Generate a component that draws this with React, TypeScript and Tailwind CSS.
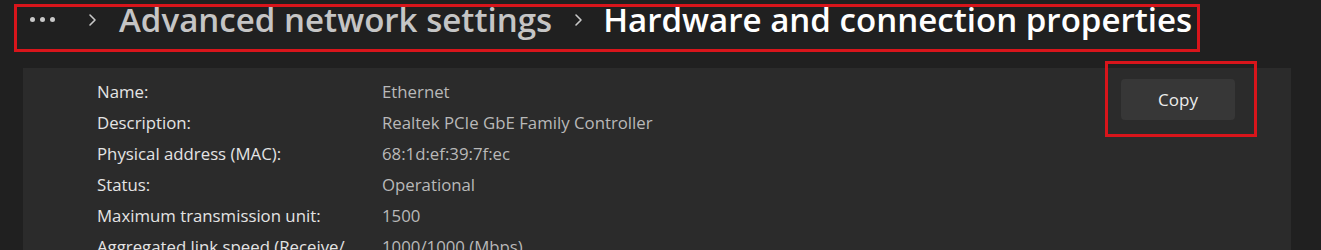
import React from "react";

const rows: [string, string][] = [
  ["Name:", "Ethernet"],
  ["Description:", "Realtek PCIe GbE Family Controller"],
  ["Physical address (MAC):", "68:1d:ef:39:7f:ec"],
  ["Status:", "Operational"],
  ["Maximum transmission unit:", "1500"],
  ["Aggregated link speed (Receive/", "1000/1000 (Mbps)"],
];

function Chevron() {
  return (
    <svg width="10" height="14" viewBox="0 0 10 14" className="block">
      <path d="M3 2 L8 7 L3 12" fill="none" stroke="#c8c8c8" strokeWidth="1.6" strokeLinecap="round" strokeLinejoin="round" />
    </svg>
  );
}

export default function App() {
  return (
    <div
      className="w-[1321px] h-[250px] bg-[#202020] overflow-hidden"
      style={{ fontFamily: '"Open Sans", "Noto Sans", sans-serif' }}
    >
      <div className="pl-[14px] pt-[4px]">
        <div className="inline-flex items-start h-[48px] border-[3px] border-[#d8151b] pl-[13px] pr-[5px]">
          <div className="flex items-center gap-[5px] w-[28px] mt-[10px]">
            <span className="w-[5px] h-[5px] rounded-full bg-[#c8c8c8]" />
            <span className="w-[5px] h-[5px] rounded-full bg-[#c8c8c8]" />
            <span className="w-[5px] h-[5px] rounded-full bg-[#c8c8c8]" />
          </div>
          <div className="ml-[29px] mr-[22px] mt-[6px]">
            <Chevron />
          </div>
          <span className="text-[33.1px] leading-[26px] font-semibold text-[#c5c5c5] whitespace-nowrap">Advanced network settings</span>
          <div className="ml-[21px] mr-[20px] mt-[6px]">
            <Chevron />
          </div>
          <span className="text-[33.1px] leading-[26px] font-semibold text-white whitespace-nowrap">Hardware and connection properties</span>
        </div>
      </div>
      <div className="ml-[23px] mr-[30px] mt-[16px] bg-[#2b2b2b] h-[200px] flex">
        <div className="pl-[74px] pt-[8px] flex-1">
          {rows.map(([k, v]) => (
            <div key={k} className="flex h-[31px] items-center text-[16.8px] whitespace-nowrap">
              <span className="w-[285px] text-[#e4e4e4]">{k}</span>
              <span className="text-[#b9b9b9]">{v}</span>
            </div>
          ))}
        </div>
        <div className="pt-[11px] pr-[56px]">
          <div className="relative">
            <button className="w-[114px] h-[41px] rounded-[4px] bg-[#373737] text-[#ececec] text-[17px]">Copy</button>
            <span className="absolute top-[-18px] left-[-16px] right-[-22px] bottom-[-17px] border-[3px] border-[#d8151b] pointer-events-none" />
          </div>
        </div>
      </div>
    </div>
  );
}
